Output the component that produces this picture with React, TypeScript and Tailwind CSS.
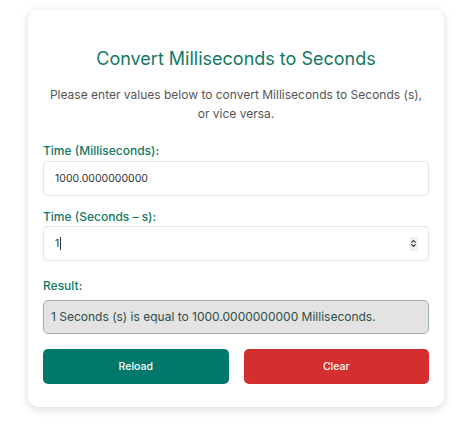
import { ChevronsUpDown } from 'lucide-react';

export default function App() {
    return (
        <div className="w-[474px] h-[428px] bg-white pt-[10px] pl-[28px]" style={{ fontFamily: 'Inter, "Noto Sans", sans-serif' }}>
            <div className="w-[416px] h-[397px] rounded-[10px] bg-white shadow-[0_2px_10px_rgba(0,0,0,0.15)] px-[15px] pt-[38px]">
                {/* Heading */}
                <h1 className="text-center text-[18px] leading-[22px] text-[#137864]">
                    Convert Milliseconds to Seconds
                </h1>
                <p className="mt-[15px] text-center text-[12px] leading-[19px] text-[#555555] px-[2px]">
                    Please enter values below to convert Milliseconds to Seconds (s),<br />or vice versa.
                </p>

                {/* Milliseconds */}
                <label className="block mt-[20px] text-[12px] leading-[16px] font-medium text-[#137864]">
                    Time (Milliseconds):
                </label>
                <div className="mt-[2px] h-[35px] flex items-center border border-[#e6e6e6] rounded-[4px] px-[11px] text-[10.5px] text-[#333333]">
                    1000.0000000000
                </div>

                {/* Seconds */}
                <label className="block mt-[13px] text-[12px] leading-[16px] font-medium text-[#137864]">
                    Time (Seconds – s):
                </label>
                <div className="mt-[1px] h-[35px] flex items-center justify-between border border-[#e6e6e6] rounded-[4px] pl-[11px] pr-[10px] text-[10.5px] text-[#333333]">
                    <span className="flex items-center">
                        1<span className="inline-block w-px h-[13px] bg-[#333333] ml-[1px]" />
                    </span>
                    <span className="flex items-center justify-center w-[9px] h-[14px] bg-[#f0f0f0] rounded-[2px]">
                        <ChevronsUpDown className="w-[9px] h-[11px] text-[#444444]" strokeWidth={3} />
                    </span>
                </div>

                {/* Result */}
                <label className="block mt-[17px] text-[12px] leading-[16px] font-medium text-[#137864]">
                    Result:
                </label>
                <div className="mt-[6px] h-[34px] flex items-center border border-[#9db0aa] rounded-[5px] bg-[#e3e3e3] px-[7px] text-[12px] text-[#2e4f4a]">
                    1 Seconds (s) is equal to 1000.0000000000 Milliseconds.
                </div>

                {/* Actions */}
                <div className="mt-[15px] grid grid-cols-2 gap-[15px]">
                    <button className="h-[35px] rounded-[5px] bg-[#00796b] text-white text-[10.5px] font-medium">
                        Reload
                    </button>
                    <button className="h-[35px] rounded-[5px] bg-[#d32f2f] text-white text-[10.5px] font-medium">
                        Clear
                    </button>
                </div>
            </div>
        </div>
    );
}
